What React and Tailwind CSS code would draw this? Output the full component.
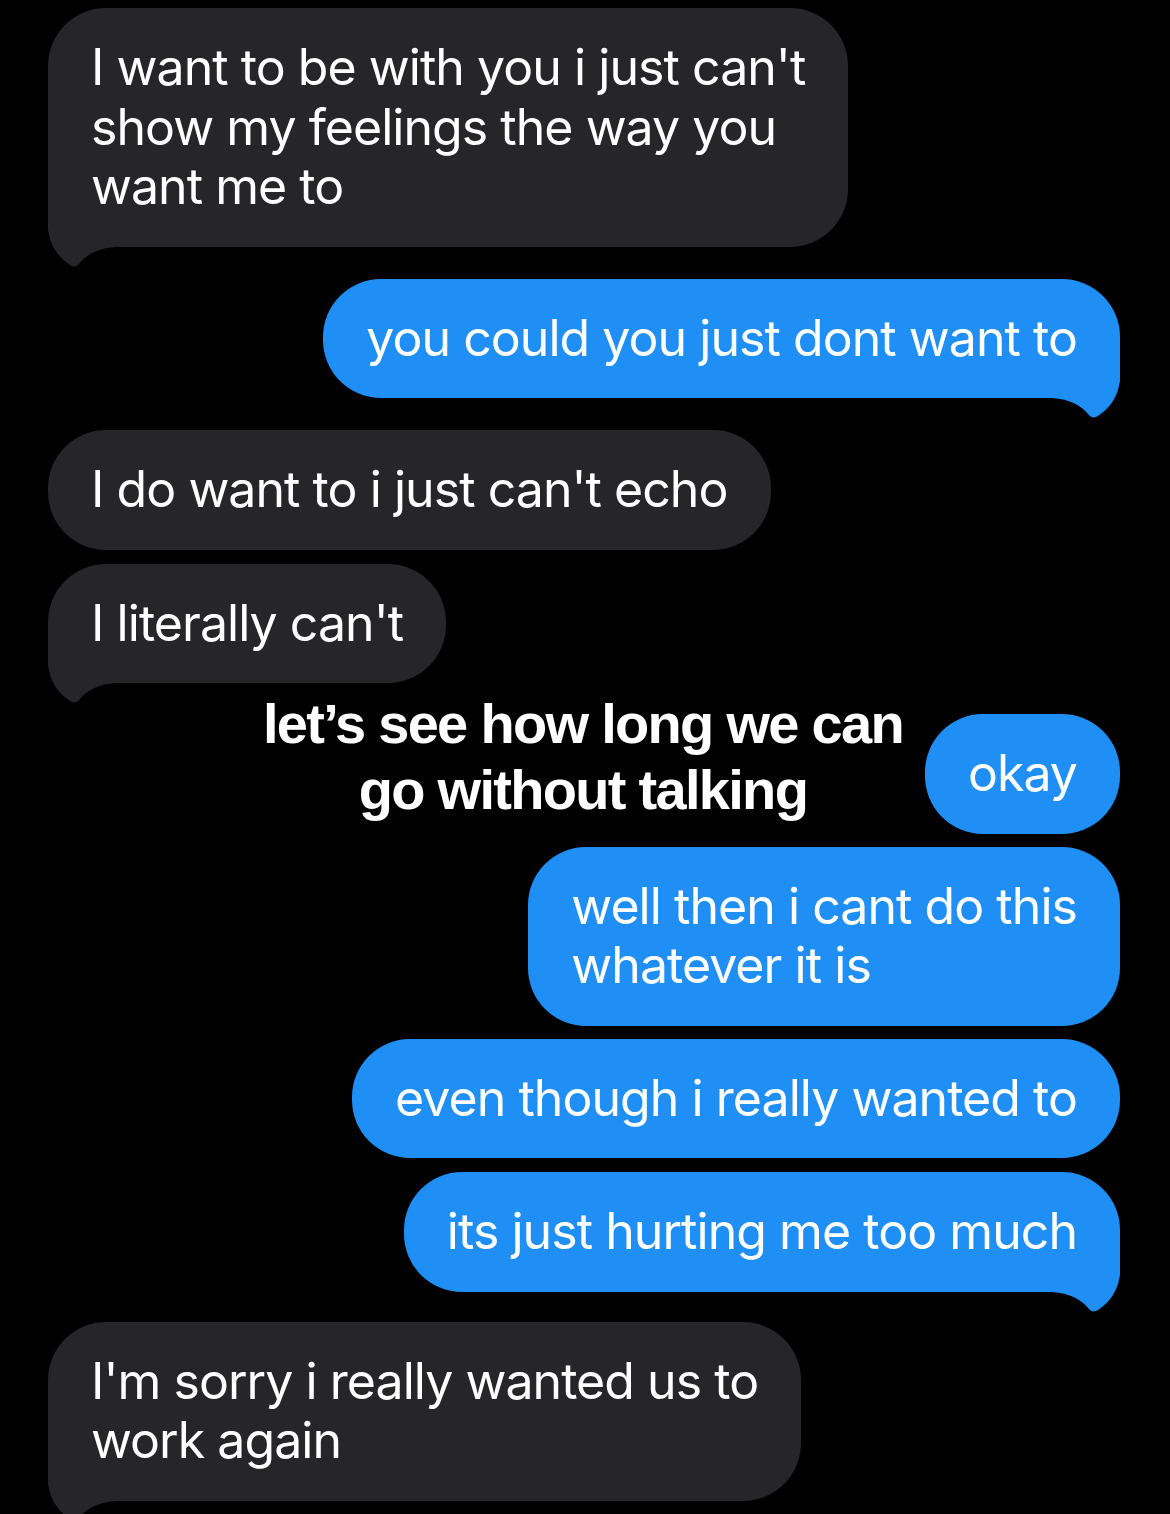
const GRAY = 'bg-[#262629]'
const BLUE = 'bg-[#1f8ff5]'

function Tail({ side, color }) {
  const left = side === 'left'
  return (
    <svg
      width="70"
      height="52"
      viewBox="0 0 70 52"
      className={
        'absolute bottom-[-20px] ' +
        (left ? 'left-0' : 'right-0 scale-x-[-1]')
      }
    >
      <path
        d="M0,0 L0,12 C1,30 10,42 22,50 C25,52 29,52 31,49 C38,40 50,33 68,32 L68,0 Z"
        fill={color}
      />
    </svg>
  )
}

function Bubble({ side, tail, children, className = '' }) {
  const left = side === 'left'
  const corner = tail ? (left ? 'rounded-bl-[20px]' : 'rounded-br-[20px]') : ''
  return (
    <div className={'flex ' + (left ? 'justify-start' : 'justify-end') + ' ' + className}>
      <div
        className={
          'relative rounded-[58px] px-[43px] py-[30px] text-[50px] leading-[59.5px] text-white tracking-[-0.95px] ' +
          corner + ' ' + (left ? GRAY : BLUE)
        }
      >
        {tail && <Tail side={side} color={left ? '#262629' : '#1f8ff5'} />}
        <span className="relative">{children}</span>
      </div>
    </div>
  )
}

export default function App() {
  return (
    <div
      className="w-[1170px] h-[1514px] overflow-hidden bg-black pt-[8px] pl-[48px] pr-[50px]"
      style={{ fontFamily: 'Inter, "Noto Sans", sans-serif' }}
    >
      <Bubble side="left" tail>
        I want to be with you i just can't<br />show my feelings the way you<br />want me to
      </Bubble>
      <Bubble side="right" tail className="mt-[32px]">
        you could you just dont want to
      </Bubble>
      <Bubble side="left" className="mt-[32px]">
        I do want to i just can't echo
      </Bubble>
      <Bubble side="left" tail className="mt-[14px]">
        I literally can't
      </Bubble>

      <div className="mt-[8px] flex items-start justify-end gap-[12px]">
        <div
          className="w-[660px] text-center text-[56px] leading-[66px] font-bold text-white tracking-[-1.7px]"
          style={{ fontFamily: '"Liberation Sans", Arial, sans-serif' }}
        >
          let’s see how long we can<br />go without talking
        </div>
        <div className={'mt-[23px] rounded-[58px] px-[43px] py-[30px] text-[50px] leading-[59.5px] text-white tracking-[-0.95px] ' + BLUE}>
          okay
        </div>
      </div>

      <Bubble side="right" className="mt-[13px]">
        well then i cant do this<br />whatever it is
      </Bubble>
      <Bubble side="right" className="mt-[13px]">
        even though i really wanted to
      </Bubble>
      <Bubble side="right" tail className="mt-[14px]">
        its just hurting me too much
      </Bubble>
      <Bubble side="left" tail className="mt-[30px]">
        I'm sorry i really wanted us to<br />work again
      </Bubble>
    </div>
  )
}
